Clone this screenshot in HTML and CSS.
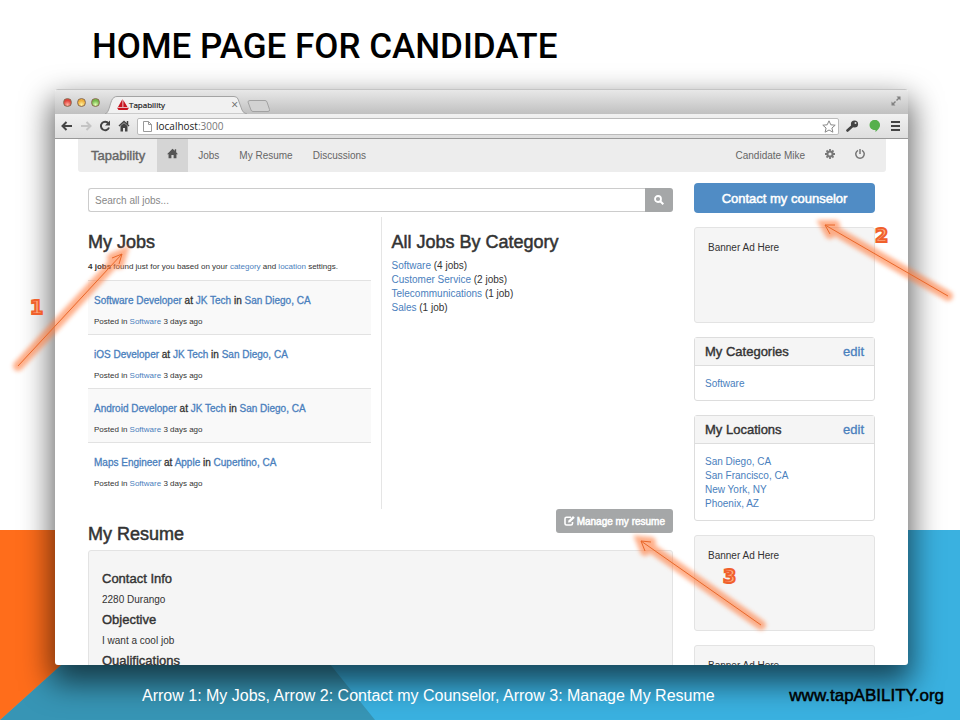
FILE: index.html
```
<!DOCTYPE html>
<html lang="en">
<head>
  <meta charset="UTF-8" />
  <meta name="viewport" content="width=device-width, initial-scale=1" />
  <title>Home Page for Candidate</title>
  <link rel="stylesheet" href="styles.css">
</head>
<body>
  <div class="slide">
    <svg class="backdrop" viewBox="0 0 960 190" preserveAspectRatio="none" aria-hidden="true">
      <rect width="960" height="190" fill="#3ab1e0"/>
      <path d="M0 190 L211 0 H222 L375 190 Z" fill="#3795b5"/>
      <path d="M0 0 H211 L0 190 Z" fill="#ff6d1b"/>
    </svg>

    <h1 class="slide-title">HOME PAGE FOR CANDIDATE</h1>

    <div class="browser">
      <!-- Tab strip -->
      <div class="tabstrip">
        <span class="light red"></span>
        <span class="light yellow"></span>
        <span class="light green"></span>
        <div class="tab">
          <svg class="tab-shape" viewBox="0 0 142 18" aria-hidden="true">
            <path d="M0 18 C5 17 5 3 9 1.500 Q10 .5 12 .5 H129 Q132 .5 133 3 L137 14 Q138 17 142 18 Z" fill="#f1f1f1" stroke="#a4a4a4"/>
          </svg>
          <svg class="favicon" width="12" height="12" viewBox="0 0 12 12" aria-hidden="true">
            <path d="M5.500 0 V8 H1 Z M6.300 1 L10.500 8 H6.300 Z M0 8.800 H12 L10.500 11 H1.500 Z" fill="#c81420"/>
          </svg>
          <span class="tab-name">Tapability</span>
          <span class="tab-close">×</span>
        </div>
        <svg class="new-tab" width="24" height="12" viewBox="0 0 24 12" aria-hidden="true">
          <path d="M1 2 Q1 .5 3 .5 H18 Q19.500 .5 20 2 L22.500 9.500 Q23 11.500 21 11.500 H6 Q4.500 11.500 4 10 Z" fill="#d2d2d2" stroke="#a2a2a2"/>
        </svg>
        <svg class="expand" width="10" height="10" viewBox="0 0 10 10" aria-hidden="true">
          <path d="M5.500 .5 H9.500 V4.500 L8 3 L6 5 L5 4 L7 2 Z M4.500 9.500 H.5 V5.500 L2 7 L4 5 L5 6 L3 8 Z" fill="#808080"/>
        </svg>
      </div>

      <!-- Toolbar -->
      <div class="toolbar">
        <svg width="12" height="12" viewBox="0 0 12 12" aria-hidden="true"><path d="M11 6 H2 M5.500 2 L1.500 6 L5.500 10" fill="none" stroke="#444" stroke-width="2"/></svg>
        <svg width="12" height="12" viewBox="0 0 12 12" aria-hidden="true"><path d="M1 6 H10 M6.500 2 L10.500 6 L6.500 10" fill="none" stroke="#c4c4c4" stroke-width="2"/></svg>
        <svg width="12" height="12" viewBox="0 0 12 12" aria-hidden="true"><path d="M9.500 3.500 A4.200 4.200 0 1 0 10 7.500" fill="none" stroke="#444" stroke-width="2"/><path d="M11 .5 V5.500 H6 Z" fill="#444"/></svg>
        <svg width="12" height="12" viewBox="0 0 12 12" aria-hidden="true"><path d="M1 6 L6 1.500 L11 6 M9.500 1 V4" fill="none" stroke="#444" stroke-width="1.500"/><path d="M2.500 6 L6 3 L9.500 6 V11.500 H7 V8 H5 V11.500 H2.500 Z" fill="#444"/></svg>
        <div class="address">
          <svg width="9" height="11" viewBox="0 0 9 11" aria-hidden="true"><path d="M.5 .5 H5.500 L8.500 3.500 V10.500 H.5 Z M5.500 .5 V3.500 H8.500" fill="#fff" stroke="#999"/></svg>
          <span class="url">localhost<span class="port">:3000</span></span>
          <svg width="14" height="13" viewBox="0 0 14 13" aria-hidden="true"><path d="M7 .8 L8.800 4.800 L13.200 5.200 L9.900 8 L10.900 12.200 L7 10 L3.100 12.200 L4.100 8 L.8 5.200 L5.200 4.800 Z" fill="#fff" stroke="#888"/></svg>
        </div>
        <div class="extensions">
          <svg width="13" height="12" viewBox="0 0 13 12" aria-hidden="true"><path d="M1.500 10.500 L7 5.500" stroke="#444" stroke-width="2.600" stroke-linecap="round"/><circle cx="8.500" cy="4" r="3.600" fill="#444"/><circle cx="9.500" cy="3" r="1" fill="#ddd"/></svg>
          <svg width="12" height="12" viewBox="0 0 12 12" aria-hidden="true"><path d="M6 0 A5 5 0 0 1 11 5 C11 8.500 8 10.500 6.500 12 V10 A5 5 0 0 1 6 0 Z" fill="#56b04c"/><circle cx="5.500" cy="5" r="5" fill="#56b04c"/></svg>
          <svg width="10" height="10" viewBox="0 0 10 10" aria-hidden="true"><path d="M0 1 H9 M0 5 H9 M0 9 H9" stroke="#444" stroke-width="2"/></svg>
        </div>
      </div>

      <div class="page">
        <nav class="navbar">
          <a class="brand" href="#">Tapability</a>
          <a class="home" href="#" aria-label="Home">
            <svg width="11" height="15" viewBox="0 0 12 15" aria-hidden="true"><path d="M6 0 L8.500 2.400 V.8 H10 V3.900 L12 6 H10.300 V10.500 H7.200 V7 H4.800 V10.500 H1.700 V6 H0 Z" fill="#555"/></svg>
          </a>
          <a href="#">Jobs</a>
          <a href="#">My Resume</a>
          <a href="#">Discussions</a>
          <a class="user" href="#">Candidate Mike</a>
          <a href="#" aria-label="Settings">
            <svg width="10" height="13" viewBox="0 0 10 13" aria-hidden="true"><circle cx="5" cy="5" r="2.600" fill="none" stroke="#777" stroke-width="2"/><path d="M5 0 V2 M5 8 V10 M0 5 H2 M8 5 H10 M1.500 1.500 L3 3 M7 7 L8.500 8.500 M8.500 1.500 L7 3 M3 7 L1.500 8.500" stroke="#777" stroke-width="1.800"/></svg>
          </a>
          <a href="#" aria-label="Log out">
            <svg width="10" height="13" viewBox="0 0 10 13" aria-hidden="true"><path d="M3 1.300 A4.200 4.200 0 1 0 7 1.300 M5 0 V5" fill="none" stroke="#777" stroke-width="1.500"/></svg>
          </a>
        </nav>

        <div class="columns">
          <main class="main">
            <form class="search">
              <input type="text" placeholder="Search all jobs..." aria-label="Search all jobs">
              <button type="button" aria-label="Search">
                <svg width="10" height="10" viewBox="0 0 10 10" aria-hidden="true"><circle cx="4" cy="4" r="3" fill="none" stroke="#fff" stroke-width="1.800"/><path d="M6 6 L9.300 9.300" stroke="#fff" stroke-width="2"/></svg>
              </button>
            </form>

            <div class="jobs">
              <section class="my-jobs">
                <h2>My Jobs</h2>
                <p class="found"><b>4 jobs</b> found just for you based on your <a href="#">category</a> and <a href="#">location</a> settings.</p>
                <ul class="job-list">
                  <li>
                    <h3><a href="#">Software Developer</a> at <a href="#">JK Tech</a> in <a href="#">San Diego, CA</a></h3>
                    <p>Posted in <a href="#">Software</a> 3 days ago</p>
                  </li>
                  <li>
                    <h3><a href="#">iOS Developer</a> at <a href="#">JK Tech</a> in <a href="#">San Diego, CA</a></h3>
                    <p>Posted in <a href="#">Software</a> 3 days ago</p>
                  </li>
                  <li>
                    <h3><a href="#">Android Developer</a> at <a href="#">JK Tech</a> in <a href="#">San Diego, CA</a></h3>
                    <p>Posted in <a href="#">Software</a> 3 days ago</p>
                  </li>
                  <li>
                    <h3><a href="#">Maps Engineer</a> at <a href="#">Apple</a> in <a href="#">Cupertino, CA</a></h3>
                    <p>Posted in <a href="#">Software</a> 3 days ago</p>
                  </li>
                </ul>
              </section>
              <section class="all-jobs">
                <h2>All Jobs By Category</h2>
                <ul class="links">
                  <li><a href="#">Software</a> (4 jobs)</li>
                  <li><a href="#">Customer Service</a> (2 jobs)</li>
                  <li><a href="#">Telecommunications</a> (1 job)</li>
                  <li><a href="#">Sales</a> (1 job)</li>
                </ul>
              </section>
            </div>

            <div class="resume-head">
              <h2>My Resume</h2>
              <button type="button" class="manage">
                <svg width="11" height="10" viewBox="0 0 11 10" aria-hidden="true"><path d="M7 1.200 H2.500 Q1 1.200 1 2.700 V7.500 Q1 9 2.500 9 H7 Q8.500 9 8.500 7.500 V6" fill="none" stroke="#fff" stroke-width="1.600"/><path d="M4 6.500 L4.500 4.500 L9 0 L10.800 1.800 L6.200 6.200 Z" fill="#fff"/></svg>
                Manage my resume
              </button>
            </div>
            <div class="well resume">
              <h3>Contact Info</h3>
              <p>2280 Durango</p>
              <h3>Objective</h3>
              <p>I want a cool job</p>
              <h3>Qualifications</h3>
            </div>
          </main>

          <aside class="sidebar">
            <button type="button" class="contact">Contact my counselor</button>
            <div class="well banner">Banner Ad Here</div>
            <section class="panel">
              <header><h3>My Categories</h3><a href="#">edit</a></header>
              <ul class="links">
                <li><a href="#">Software</a></li>
              </ul>
            </section>
            <section class="panel">
              <header><h3>My Locations</h3><a href="#">edit</a></header>
              <ul class="links">
                <li><a href="#">San Diego, CA</a></li>
                <li><a href="#">San Francisco, CA</a></li>
                <li><a href="#">New York, NY</a></li>
                <li><a href="#">Phoenix, AZ</a></li>
              </ul>
            </section>
            <div class="well banner">Banner Ad Here</div>
            <div class="well banner">Banner Ad Here</div>
          </aside>
        </div>
      </div>
    </div>

    <footer class="caption">
      <p>Arrow 1: My Jobs, Arrow 2: Contact my Counselor, Arrow 3: Manage My Resume</p>
      <a href="#">www.tapABILITY.org</a>
    </footer>

    <!-- Numbered arrows over the window -->
    <svg class="arrows" viewBox="0 0 960 720" aria-hidden="true">
      <defs>
        <filter id="glow" filterUnits="userSpaceOnUse" x="0" y="0" width="960" height="720">
          <feGaussianBlur stdDeviation="2"/>
        </filter>
        <g id="lines">
          <path d="M18 366 L122 254 M112 258 L122 254 L119 264"/>
          <path d="M948 296 L825 225 M830 234 L825 225 L835 225"/>
          <path d="M761 625 L641 541 M645 551 L641 541 L651 542"/>
        </g>
      </defs>
      <use href="#lines" class="glow" filter="url(#glow)"/>
      <use href="#lines" class="line"/>
      <g class="number">
        <text x="30" y="314">1</text>
        <text x="875" y="242">2</text>
        <text x="723" y="583">3</text>
      </g>
    </svg>
  </div>
</body>
</html>
```
FILE: styles.css
```
* {
  box-sizing: border-box;
}

body {
  margin: 0;
  background: #fff;
  color: #333;
  font-family: "Liberation Sans", Arial, sans-serif;
  font-size: 10px;
  line-height: 14px;
}

h1, h2, h3, p, ul {
  margin: 0;
  padding: 0;
}

ul {
  list-style: none;
}

a {
  color: #4a80bd;
  text-decoration: none;
}

svg {
  display: block;
  flex: none;
}

button, input {
  font-family: inherit;
}

.slide {
  position: relative;
  display: flex;
  flex-direction: column;
  min-height: 100vh;
  overflow: hidden;
}

.backdrop {
  position: absolute;
  left: 0;
  bottom: 0;
  width: 100%;
  height: 190px;
}

.slide-title {
  padding: 27px 92px 22px;
  color: #000;
  font-family: Roboto, sans-serif;
  font-size: 35px;
  font-weight: 500;
  line-height: 40px;
}

/* Browser window */
.browser {
  position: relative;
  display: flex;
  flex-direction: column;
  flex: 1 1 0;
  min-height: 0;
  margin: 0 52px 0 55px;
  overflow: hidden;
  border-radius: 3px;
  background: #fff;
  box-shadow: 0 14px 30px 4px rgba(0, 0, 0, 0.6);
}

.tabstrip {
  display: flex;
  align-items: flex-end;
  flex: none;
  height: 25px;
  padding-left: 8px;
  border-top: 1px solid #c4c4c4;
  background: linear-gradient(#e8e8e8, #c0c0c0);
}

.light {
  width: 9px;
  height: 9px;
  margin: 0 5px 7px 0;
  border: 1px solid #8a6a50;
  border-radius: 50%;
}

.red {
  background: radial-gradient(circle at 50% 80%, #ffb0a0, #e0443c 60%);
}

.yellow {
  background: radial-gradient(circle at 50% 80%, #fff0a0, #eeb03c 60%);
}

.green {
  background: radial-gradient(circle at 50% 80%, #e0ffb0, #76b84c 60%);
}

.tab {
  position: relative;
  display: flex;
  align-items: center;
  width: 142px;
  height: 18px;
  padding: 0 9px 0 12px;
  color: #222;
  font-family: "Open Sans", sans-serif;
  font-size: 8px;
}

.tab-shape {
  position: absolute;
  left: 0;
  top: 0;
  width: 142px;
  height: 18px;
}

.favicon, .tab-name, .tab-close {
  position: relative;
}

.tab-name {
  -webkit-text-stroke: 0.2px;
}

.tab-close {
  margin-left: auto;
  color: #666;
  font-size: 12px;
}

.new-tab {
  margin-bottom: 2px;
}

.expand {
  margin: 0 7px 8px auto;
}

.toolbar {
  display: flex;
  align-items: center;
  flex: none;
  gap: 7px;
  height: 25px;
  padding: 0 7px 0 6px;
  border-bottom: 1px solid #999;
  background: linear-gradient(#f1f1f1, #dedede);
}

.address {
  display: flex;
  align-items: center;
  flex: 1;
  gap: 4px;
  height: 17px;
  padding: 0 2px 0 5px;
  border: 1px solid #bbb;
  border-radius: 2px;
  background: #fff;
}

.extensions {
  display: flex;
  align-items: center;
  gap: 10px;
}

.url {
  flex: 1;
  color: #222;
  font-family: "Open Sans", sans-serif;
}

.port {
  color: #777;
}

/* Tapability page */
.page {
  flex: 1;
  min-height: 0;
  padding: 0 22px 0 23px;
}

.navbar {
  display: flex;
  height: 33px;
  padding-right: 11px;
  border-radius: 0 0 3px 3px;
  background: #ededed;
}

.navbar a {
  display: flex;
  align-items: center;
  padding: 0 10px;
  color: #666;
}

.navbar .brand {
  padding: 0 12px 0 13px;
  font-size: 13px;
  -webkit-text-stroke: 0.4px;
}

.navbar .home {
  background: #d5d5d5;
}

.navbar .user {
  margin-left: auto;
}

.columns {
  display: flex;
  gap: 21px;
  padding: 11px 11px 0 10px;
}

.main {
  flex: 1;
  min-width: 0;
  padding-top: 5px;
}

.sidebar {
  display: flex;
  flex-direction: column;
  flex: none;
  gap: 14px;
  width: 181px;
}

.search {
  display: flex;
  height: 24px;
}

.search input {
  flex: 1;
  min-width: 0;
  padding: 0 6px;
  border: 1px solid #ccc;
  border-right: 0;
  border-radius: 3px 0 0 3px;
  font-size: 10px;
}

.search input::placeholder {
  color: #888;
}

.search button {
  display: flex;
  align-items: center;
  justify-content: center;
  width: 28px;
  padding: 0;
  border: 0;
  border-radius: 0 3px 3px 0;
  background: #a5a7a8;
}

h2 {
  font-size: 18px;
  font-weight: normal;
  line-height: 20px;
  -webkit-text-stroke: 0.5px;
}

.jobs {
  display: flex;
  min-height: 292px;
  margin-top: 5px;
}

.my-jobs {
  width: 50%;
  padding: 15px 10px 0 0;
}

.all-jobs {
  width: 50%;
  padding: 15px 10px 0;
  border-left: 1px solid #e5e5e5;
}

.all-jobs .links {
  margin-top: 7px;
}

.found {
  margin-top: 8px;
  font-size: 8px;
  white-space: nowrap;
}

.job-list {
  margin-top: 6px;
}

.job-list li {
  height: 54px;
  padding: 13px 6px 0;
  border-top: 1px solid #e2e2e2;
}

.job-list li:nth-child(odd) {
  background: #f9f9f9;
}

.job-list h3 {
  font-size: 10px;
  font-weight: normal;
  line-height: 14px;
  -webkit-text-stroke: 0.3px;
}

.job-list p {
  margin-top: 8px;
  font-size: 8px;
  line-height: 12px;
}

.resume-head {
  display: flex;
  align-items: flex-start;
  justify-content: space-between;
  height: 41px;
}

.resume-head h2 {
  margin-top: 15px;
}

.manage {
  display: flex;
  align-items: center;
  gap: 2px;
  height: 24px;
  padding: 0 8px;
  border: 0;
  border-radius: 3px;
  background: #a5a7a8;
  color: #fff;
  font-size: 10px;
  -webkit-text-stroke: 0.5px;
}

.well {
  border: 1px solid #e3e3e3;
  border-radius: 3px;
  background: #f5f5f5;
}

.resume {
  padding: 20px 13px;
}

.resume h3, .panel h3 {
  font-size: 13px;
  font-weight: normal;
  line-height: 16px;
  -webkit-text-stroke: 0.4px;
}

.resume p {
  margin: 6px 0 5px;
  line-height: 14px;
}

.contact {
  height: 30px;
  border: 0;
  border-radius: 4px;
  background: #508cc5;
  color: #fff;
  font-size: 13px;
  -webkit-text-stroke: 0.5px;
}

.banner {
  height: 96px;
  padding: 13px;
}

.panel {
  border: 1px solid #ddd;
  border-radius: 3px;
}

.panel header {
  display: flex;
  align-items: center;
  justify-content: space-between;
  height: 28px;
  padding: 0 10px;
  border-bottom: 1px solid #ddd;
  background: #f5f5f5;
}

.panel header a {
  font-size: 13px;
  -webkit-text-stroke: 0.3px;
}

.panel .links {
  padding: 11px 10px 9px;
}

/* Slide caption */
.caption {
  position: relative;
  display: flex;
  align-items: center;
  justify-content: space-between;
  height: 55px;
  padding: 6px 16px 0 142px;
  color: #fff;
  font-size: 16px;
}

.caption a {
  color: #000;
  font-size: 17px;
  -webkit-text-stroke: 0.5px;
}

.arrows {
  position: absolute;
  left: 0;
  top: 0;
  width: 100%;
  height: 100%;
  pointer-events: none;
}

.glow {
  fill: none;
  stroke: #ff7b3d;
  stroke-width: 10px;
  stroke-linecap: round;
  opacity: 0.6;
}

.line {
  fill: none;
  stroke: #e8682a;
  stroke-width: 1px;
}

.number {
  fill: #ffb088;
  stroke: #f0602c;
  stroke-width: 2px;
  font-family: "DejaVu Sans", sans-serif;
  font-size: 19px;
  font-weight: bold;
}
```
